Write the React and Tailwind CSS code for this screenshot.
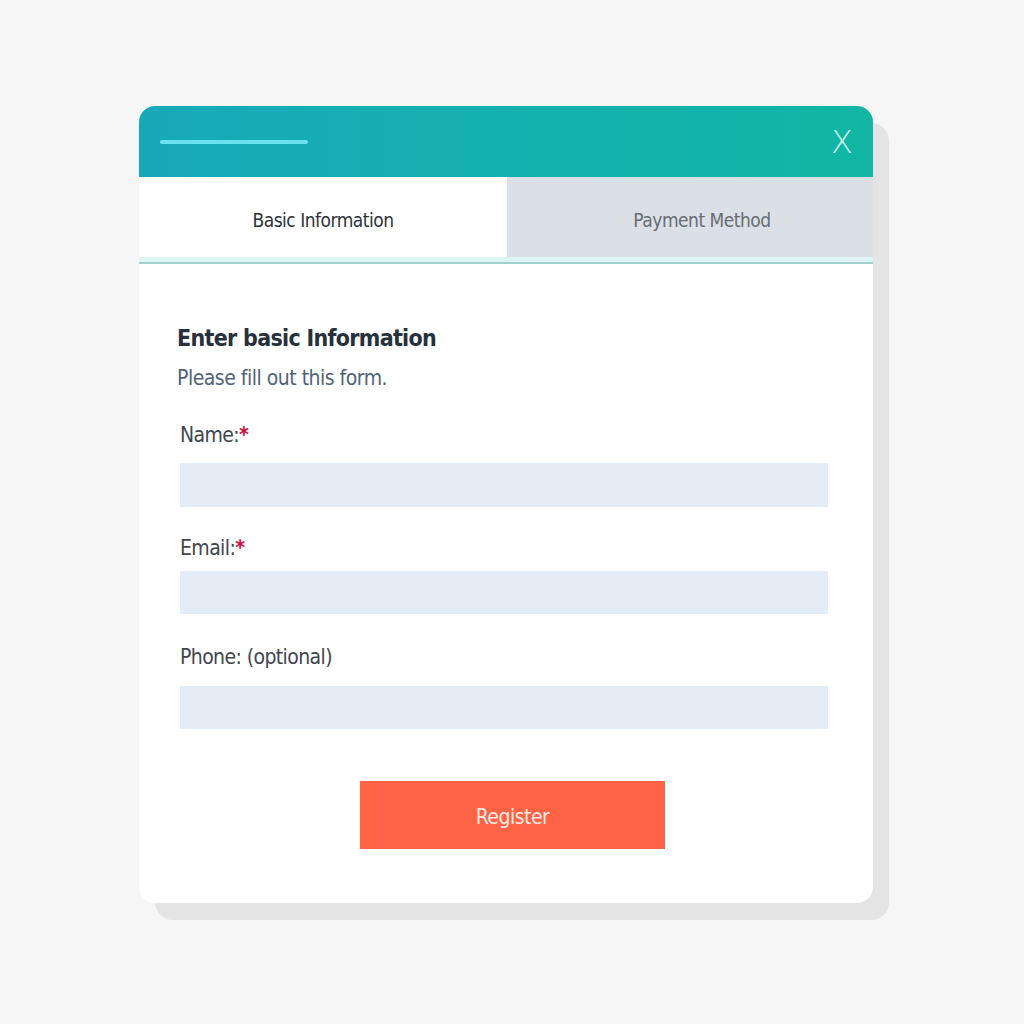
import React from 'react';

const font = { fontFamily: '"DejaVu Sans", "Liberation Sans", sans-serif' };

function Field({ label, required, top, gap, height }) {
  return (
    <div className="flex flex-col" style={{ marginTop: top }}>
      <label className="ml-[3px] text-[21px] leading-[26px] tracking-[-0.6px] text-[#3f464d]">
        {label}
        {required && <span className="font-bold text-[#d0103a]">*</span>}
      </label>
      <div className="ml-[3px] w-[648px] bg-[#e4edf5]" style={{ marginTop: gap, height }} />
    </div>
  );
}

export default function App() {
  return (
    <div className="min-h-screen w-full bg-[#f6f6f6] pt-[106px] pl-[139px] font-stretch-condensed" style={font}>
      <div className="relative w-[734px]">
        {/* offset shadow card */}
        <div className="absolute left-[16px] top-[17px] h-full w-full rounded-[18px] bg-[#e4e4e4]" />

        <div className="relative flex h-[797px] w-[734px] flex-col overflow-hidden rounded-[16px] bg-white">
          {/* Header */}
          <div className="flex h-[71px] items-center justify-between bg-gradient-to-r from-[#18a9b9] to-[#11b6a4] pl-[21px] pr-[20px]">
            <div className="h-[4px] w-[148px] rounded-full bg-[#6fe2f0]" />
            <span className="text-[32px] font-light leading-none text-[#c9f4ef]">X</span>
          </div>

          {/* Tabs */}
          <div className="flex h-[80px]">
            <div className="flex w-[368px] items-center justify-center bg-white pt-[6px] text-[19px] tracking-[-0.5px] text-[#2e3338]">
              Basic Information
            </div>
            <div className="flex flex-1 items-center justify-center bg-[#dbe0e7] pt-[6px] pl-[24px] text-[19px] tracking-[-0.5px] text-[#676d72]">
              Payment Method
            </div>
          </div>
          <div className="h-[5px] bg-[#ddf4f4]" />
          <div className="h-[2px] bg-[#a3cfcf]" />

          {/* Body */}
          <div className="flex flex-col pl-[38px] pt-[58px]">
            <h2 className="text-[23px] font-bold leading-[32px] tracking-[-0.7px] text-[#27313d]">Enter basic Information</h2>
            <p className="mt-[11px] text-[21px] leading-[26px] tracking-[-0.5px] text-[#4f6478]">Please fill out this form.</p>

            <Field label="Name:" required top={31} gap={15} height={44} />
            <Field label="Email:" required top={28} gap={10} height={43} />
            <Field label="Phone: (optional)" top={30} gap={16} height={43} />

            <div className="mt-[52px] flex w-[648px] justify-center">
              <button className="ml-[23px] h-[68px] w-[305px] bg-[#fe6346] pt-[5px] text-[21px] tracking-[-0.5px] text-[#fde9e2]">
                Register
              </button>
            </div>
          </div>
        </div>
      </div>
    </div>
  );
}
